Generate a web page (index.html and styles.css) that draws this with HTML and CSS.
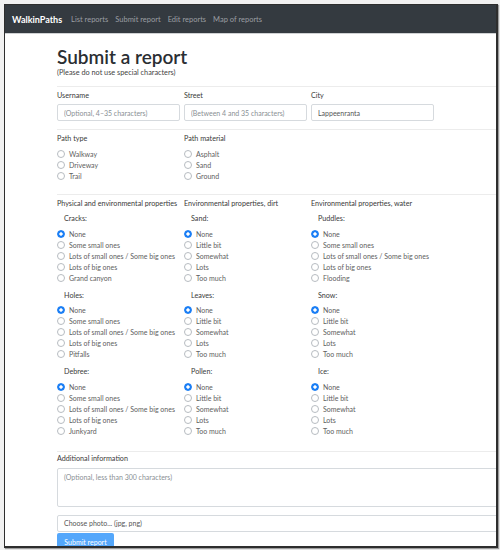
FILE: index.html
```html
<!DOCTYPE html>
<html>
<head>
<meta charset="utf-8">
<link rel="stylesheet" href="styles.css">
</head>
<body>
<div class="window">
  <nav class="navbar">
    <span class="brand">WalkinPaths</span>
    <a class="nav-link">List reports</a>
    <a class="nav-link">Submit report</a>
    <a class="nav-link">Edit reports</a>
    <a class="nav-link">Map of reports</a>
  </nav>
  <main class="container">
    <h1 class="title">Submit a report</h1>
    <p class="subtitle">(Please do not use special characters)</p>
    <div class="rule rule-top"></div>

    <div class="row3">
      <div class="field">
        <div class="lbl">Username</div>
        <input class="input" type="text" placeholder="(Optional, 4–35 characters)">
      </div>
      <div class="field">
        <div class="lbl">Street</div>
        <input class="input" type="text" placeholder="(Between 4 and 35 characters)">
      </div>
      <div class="field">
        <div class="lbl">City</div>
        <input class="input" type="text" value="Lappeenranta">
      </div>
    </div>
    <div class="rule rule-mid"></div>

    <div class="row3">
      <div class="col">
        <div class="lbl">Path type</div>
        <div class="radios">
          <label class="radio"><input type="radio" name="pt">Walkway</label>
          <label class="radio"><input type="radio" name="pt">Driveway</label>
          <label class="radio"><input type="radio" name="pt">Trail</label>
        </div>
      </div>
      <div class="col">
        <div class="lbl">Path material</div>
        <div class="radios">
          <label class="radio"><input type="radio" name="pm">Asphalt</label>
          <label class="radio"><input type="radio" name="pm">Sand</label>
          <label class="radio"><input type="radio" name="pm">Ground</label>
        </div>
      </div>
    </div>
    <div class="rule rule-props"></div>

    <div class="row3">
      <div class="col">
        <div class="lbl">Physical and environmental properties</div>
        <div class="group">
          <div class="sublbl">Cracks:</div>
          <div class="radios">
            <label class="radio"><input type="radio" name="cr" checked>None</label>
            <label class="radio"><input type="radio" name="cr">Some small ones</label>
            <label class="radio"><input type="radio" name="cr">Lots of small ones / Some big ones</label>
            <label class="radio"><input type="radio" name="cr">Lots of big ones</label>
            <label class="radio"><input type="radio" name="cr">Grand canyon</label>
          </div>
        </div>
        <div class="group">
          <div class="sublbl">Holes:</div>
          <div class="radios">
            <label class="radio"><input type="radio" name="ho" checked>None</label>
            <label class="radio"><input type="radio" name="ho">Some small ones</label>
            <label class="radio"><input type="radio" name="ho">Lots of small ones / Some big ones</label>
            <label class="radio"><input type="radio" name="ho">Lots of big ones</label>
            <label class="radio"><input type="radio" name="ho">Pitfalls</label>
          </div>
        </div>
        <div class="group">
          <div class="sublbl">Debree:</div>
          <div class="radios">
            <label class="radio"><input type="radio" name="de" checked>None</label>
            <label class="radio"><input type="radio" name="de">Some small ones</label>
            <label class="radio"><input type="radio" name="de">Lots of small ones / Some big ones</label>
            <label class="radio"><input type="radio" name="de">Lots of big ones</label>
            <label class="radio"><input type="radio" name="de">Junkyard</label>
          </div>
        </div>
      </div>

      <div class="col">
        <div class="lbl">Environmental properties, dirt</div>
        <div class="group">
          <div class="sublbl">Sand:</div>
          <div class="radios">
            <label class="radio"><input type="radio" name="sa" checked>None</label>
            <label class="radio"><input type="radio" name="sa">Little bit</label>
            <label class="radio"><input type="radio" name="sa">Somewhat</label>
            <label class="radio"><input type="radio" name="sa">Lots</label>
            <label class="radio"><input type="radio" name="sa">Too much</label>
          </div>
        </div>
        <div class="group">
          <div class="sublbl">Leaves:</div>
          <div class="radios">
            <label class="radio"><input type="radio" name="le" checked>None</label>
            <label class="radio"><input type="radio" name="le">Little bit</label>
            <label class="radio"><input type="radio" name="le">Somewhat</label>
            <label class="radio"><input type="radio" name="le">Lots</label>
            <label class="radio"><input type="radio" name="le">Too much</label>
          </div>
        </div>
        <div class="group">
          <div class="sublbl">Pollen:</div>
          <div class="radios">
            <label class="radio"><input type="radio" name="po" checked>None</label>
            <label class="radio"><input type="radio" name="po">Little bit</label>
            <label class="radio"><input type="radio" name="po">Somewhat</label>
            <label class="radio"><input type="radio" name="po">Lots</label>
            <label class="radio"><input type="radio" name="po">Too much</label>
          </div>
        </div>
      </div>

      <div class="col">
        <div class="lbl">Environmental properties, water</div>
        <div class="group">
          <div class="sublbl">Puddles:</div>
          <div class="radios">
            <label class="radio"><input type="radio" name="pu" checked>None</label>
            <label class="radio"><input type="radio" name="pu">Some small ones</label>
            <label class="radio"><input type="radio" name="pu">Lots of small ones / Some big ones</label>
            <label class="radio"><input type="radio" name="pu">Lots of big ones</label>
            <label class="radio"><input type="radio" name="pu">Flooding</label>
          </div>
        </div>
        <div class="group">
          <div class="sublbl">Snow:</div>
          <div class="radios">
            <label class="radio"><input type="radio" name="sn" checked>None</label>
            <label class="radio"><input type="radio" name="sn">Little bit</label>
            <label class="radio"><input type="radio" name="sn">Somewhat</label>
            <label class="radio"><input type="radio" name="sn">Lots</label>
            <label class="radio"><input type="radio" name="sn">Too much</label>
          </div>
        </div>
        <div class="group">
          <div class="sublbl">Ice:</div>
          <div class="radios">
            <label class="radio"><input type="radio" name="ic" checked>None</label>
            <label class="radio"><input type="radio" name="ic">Little bit</label>
            <label class="radio"><input type="radio" name="ic">Somewhat</label>
            <label class="radio"><input type="radio" name="ic">Lots</label>
            <label class="radio"><input type="radio" name="ic">Too much</label>
          </div>
        </div>
      </div>
    </div>
    <div class="rule rule-bottom"></div>

    <div class="lbl lbl-add">Additional information</div>
    <textarea class="textarea" placeholder="(Optional, less than 300 characters)"></textarea>
    <div class="file">Choose photo... (jpg, png)</div>
    <button class="btn" type="button">Submit report</button>
  </main>
</div>
</body>
</html>
```

FILE: styles.css
```css
* { box-sizing: border-box; }

html, body {
  margin: 0;
  padding: 0;
  background: #f1f1f1;
}

body {
  font-family: "Lato", "Open Sans", sans-serif;
  color: #3a3a3a;
  width: 500px;
  height: 550px;
  overflow: hidden;
}

.window {
  margin: 4px 0 0 4px;
  width: 494px;
  height: 544px;
  border: 1px solid #2e2e2e;
  border-right: 2px solid #2e2e2e;
  border-bottom: 2px solid #2e2e2e;
  background: #fff;
  overflow: hidden;
  box-shadow: 1px 1px 1px rgba(0,0,0,0.35);
}

.navbar {
  height: 29px;
  background: #343a40;
  border-bottom: 1px solid #cfd1d3;
  display: flex;
  align-items: center;
  padding-left: 7px;
  gap: 7px;
  white-space: nowrap;
}

.brand {
  color: #fff;
  font-weight: 700;
  font-size: 9px;
  margin-right: 2px;
}

.nav-link {
  color: #9b9ea2;
  font-size: 7.5px;
}

.container {
  width: 560px;
  padding-left: 52px;
}

.title {
  margin: 13px 0 0;
  font-size: 19px;
  line-height: 20px;
  font-weight: 600;
  color: #2a2e32;
}

.subtitle {
  margin: 1px 0 0;
  font-size: 7.3px;
  line-height: 10px;
  color: #444;
}

.rule {
  height: 1px;
  background: #ececec;
}
.rule-top { margin-top: 8px; }
.rule-mid { margin-top: 8px; }
.rule-props { margin-top: 13px; }
.rule-bottom { margin-top: 15px; }

.row3 {
  display: grid;
  grid-template-columns: 123px 123px 123px;
  column-gap: 4px;
}

.lbl {
  margin-top: 4px;
  font-size: 7.2px;
  line-height: 10px;
  color: #3a3a3a;
  white-space: nowrap;
}

.input {
  display: block;
  margin-top: 3px;
  width: 123px;
  height: 17px;
  border: 1px solid #d6dade;
  border-radius: 2px;
  padding: 0 0 0 6px;
  font-family: inherit;
  font-size: 7px;
  color: #555;
  background: #fff;
  outline: none;
}
.input::placeholder { color: #8a8f94; }

.radios {
  margin-top: 4px;
  display: flex;
  flex-direction: column;
}

.radio {
  display: flex;
  align-items: center;
  height: 11px;
  font-size: 7px;
  color: #606060;
  white-space: nowrap;
}

.radio input {
  appearance: none;
  -webkit-appearance: none;
  margin: 0 4px 0 0;
  width: 8px;
  height: 8px;
  border: 1px solid #b7bcc1;
  border-radius: 50%;
  background: #fff;
  flex: none;
}

.radio input:checked {
  border-color: #1a7ef5;
  background: radial-gradient(circle, #fff 0 1.4px, #1a7ef5 1.9px);
}

.group { margin-top: 7.5px; }
.col > .lbl + .group { margin-top: 0; }

.sublbl {
  margin-top: 5px;
  padding-left: 7px;
  font-size: 7.2px;
  line-height: 10px;
  color: #3a3a3a;
}
.group + .group .sublbl { margin-top: 0; }

.lbl-add { margin-top: 2px; }

.textarea {
  display: block;
  margin-top: 4px;
  width: 500px;
  height: 39px;
  border: 1px solid #d6dade;
  border-radius: 2px;
  padding: 4px 6px;
  font-family: inherit;
  font-size: 7px;
  resize: none;
  outline: none;
}
.textarea::placeholder { color: #8a8f94; }

.file {
  margin-top: 8px;
  width: 500px;
  height: 17px;
  border: 1px solid #d6dade;
  border-radius: 2px;
  padding-left: 6px;
  font-size: 7px;
  line-height: 15px;
  color: #555;
}

.btn {
  display: block;
  margin-top: 1px;
  width: 57px;
  height: 17px;
  border: none;
  border-radius: 2px;
  background: #54a7fb;
  color: #fff;
  font-family: inherit;
  font-size: 7px;
  padding: 0;
}
```
